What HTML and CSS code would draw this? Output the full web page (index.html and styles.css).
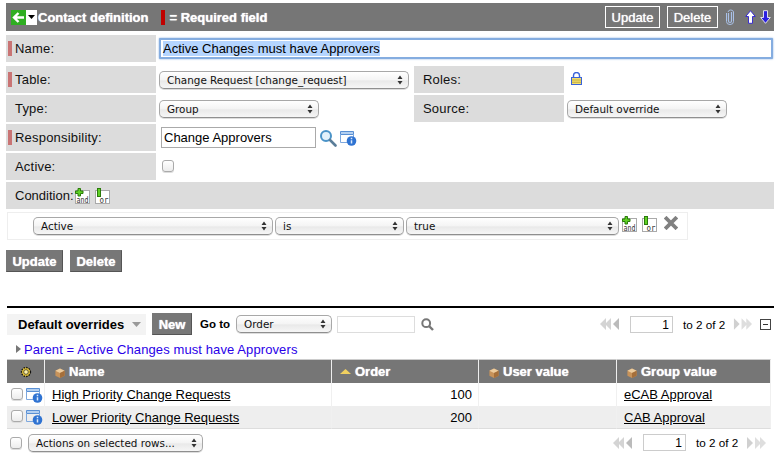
FILE: index.html
```html
<!DOCTYPE html>
<html lang="en">
<head>
<meta charset="utf-8">
<title>Contact definition</title>
<link rel="stylesheet" href="styles.css">
</head>
<body>
<svg class="defs" width="0" height="0" aria-hidden="true">
  <defs>
    <symbol id="info" viewBox="0 0 18 16">
      <path d="M1.500 1.500h13v3h-13z" fill="#b4d0f0" stroke="#5a90d4"/>
      <path d="M1.500 4.500v8h7M14.500 4.500v3" fill="none" stroke="#7ea8de"/>
      <circle cx="12.500" cy="11" r="4.800" fill="#2f73d2"/>
      <path d="M12.500 7.800v1.400M12.500 10.200v3.400" stroke="#dbe9fb" stroke-width="1.500"/>
    </symbol>
    <symbol id="box" viewBox="0 0 12 12">
      <path d="M6 1.500l4.600 2.200v5L6 11 1.400 8.700v-5z" fill="#c8935a"/>
      <path d="M6 1.500l4.600 2.200L6 6 1.400 3.700z" fill="#eccb9c"/>
      <path d="M6 6v5l4.600-2.300v-5z" fill="#a56f3a"/>
    </symbol>
    <symbol id="mag" viewBox="0 0 18 18">
      <circle cx="7" cy="7" r="5" fill="#e2f1fb" stroke="#4a93c8" stroke-width="2"/>
      <path d="M11 11l5.500 5.500" stroke="#5a7d99" stroke-width="2.600" stroke-linecap="round"/>
    </symbol>
    <symbol id="stepper" viewBox="0 0 6 10">
      <path d="M3 .5L5.500 4H.5zM3 9.500L.5 6h5z" fill="#333"/>
    </symbol>
    <symbol id="dbl-left" viewBox="0 0 20 12">
      <path d="M6 0v12L0 6zM11 0v12L5 6z" fill="#d4d4d4"/>
      <path d="M19 0v12l-6-6z" fill="#bbb"/>
    </symbol>
    <symbol id="dbl-right" viewBox="0 0 20 12">
      <path d="M1 0v12l6-6z" fill="#d0d0d0"/>
      <path d="M9 0v12l6-6zM14 0v12l6-6z" fill="#dedede"/>
    </symbol>
    <symbol id="and" viewBox="0 0 16 16">
      <rect x="1.500" y="2.500" width="14" height="13" fill="#fff" stroke="#aaa"/>
      <path d="M4 .5h2.500V3H9v2.500H6.500V8H4V5.500H1.500V3H4z" fill="#5fd024" stroke="#2b7a0b"/>
      <text x="2.500" y="15" class="and-text" textLength="12" lengthAdjust="spacingAndGlyphs">and</text>
    </symbol>
    <symbol id="or" viewBox="0 0 16 16">
      <rect x="1.500" y="2.500" width="14" height="13" fill="#fff" stroke="#aaa"/>
      <rect x="3.500" y=".5" width="3" height="8" fill="#5fd024" stroke="#2b7a0b"/>
      <text x="5.500" y="15" class="and-text" textLength="9" lengthAdjust="spacingAndGlyphs">or</text>
    </symbol>
  </defs>
</svg>

<div class="page">
  <header class="titlebar">
    <span class="back">
      <svg class="back-icon" viewBox="0 0 15 15" width="15" height="15"><rect width="15" height="15" fill="#2fae22"/><path d="M7.500 3L3 7.500 7.500 12M3.500 7.500H13" fill="none" stroke="#fff" stroke-width="2.400"/></svg>
      <svg class="back-caret" viewBox="0 0 7 4" width="7" height="4"><path d="M0 0h7L3.500 4z" fill="#000"/></svg>
    </span>
    <span class="title">Contact definition</span>
    <span class="req-mark"></span>
    <span class="title">= Required field</span>
    <span class="spacer"></span>
    <button class="hbtn hbtn-update">Update</button>
    <button class="hbtn hbtn-delete">Delete</button>
    <svg class="clip" viewBox="0 0 10 16" width="10" height="16"><path d="M3.500 4v8a1.500 1.500 0 0 0 3 0V3" fill="none" stroke="#a9c0e6" stroke-width="1.200"/><path d="M1.500 4v8.500a3.500 3 0 0 0 7 0V3A2.800 2.500 0 0 0 3 3" fill="none" stroke="#a9c0e6"/></svg>
    <svg class="arrow-up" viewBox="0 0 11 14" width="11" height="14"><path d="M5.500 .7L10.300 6.500H7.500V13.300H3.500V6.500H.7z" fill="#fff" stroke="#3b2fd0"/></svg>
    <svg class="arrow-down" viewBox="0 0 11 14" width="11" height="14"><path d="M5.500 13.300L10.300 7.500H7.500V.7h-4v6.800H.7z" fill="#2a1fe0" stroke="#fff" stroke-width=".8"/></svg>
  </header>

  <section class="form">
    <div class="label req name-label">Name:</div>
    <div class="name-value"><div class="name-input"><span class="selected">Active Changes must have Approvers</span></div></div>

    <div class="label req">Table:</div>
    <div class="value"><div class="sel sel-table">Change Request [change_request]<svg class="step"><use href="#stepper"/></svg></div></div>
    <div class="label lab2">Roles:</div>
    <div class="value"><svg class="lock" viewBox="0 0 11 13" width="11" height="13"><path d="M2.500 6V3.500a3 3 0 0 1 6 0V6" fill="none" stroke="#3a63d8" stroke-width="1.400"/><rect x=".5" y="5.500" width="10" height="7" fill="#f1dc6b" stroke="#3a63d8"/><path d="M1 8h9M1 10.300h9" stroke="#b8a63c" stroke-width=".8"/></svg></div>

    <div class="label">Type:</div>
    <div class="value"><div class="sel sel-type">Group<svg class="step"><use href="#stepper"/></svg></div></div>
    <div class="label lab2">Source:</div>
    <div class="value"><div class="sel sel-type">Default override<svg class="step"><use href="#stepper"/></svg></div></div>

    <div class="label req">Responsibility:</div>
    <div class="value resp">
      <div class="text-input">Change Approvers</div>
      <svg class="mag"><use href="#mag"/></svg>
      <svg class="info info-resp"><use href="#info"/></svg>
    </div>
    <div class="wide-blank"></div>

    <div class="label">Active:</div>
    <div class="value active-val"><span class="check"></span></div>
    <div class="wide-blank"></div>

    <div class="label cond-label">Condition:<svg class="aicon cond-and"><use href="#and"/></svg><svg class="aicon cond-or"><use href="#or"/></svg></div>
  </section>

  <div class="cond-box">
    <div class="sel sel-c1">Active<svg class="step"><use href="#stepper"/></svg></div>
    <div class="sel sel-c2">is<svg class="step"><use href="#stepper"/></svg></div>
    <div class="sel sel-c3">true<svg class="step"><use href="#stepper"/></svg></div>
    <svg class="aicon box-and"><use href="#and"/></svg>
    <svg class="aicon box-or"><use href="#or"/></svg>
    <svg class="x" viewBox="0 0 14 14" width="14" height="14"><path d="M2.500 2.500l9 9M11.500 2.500l-9 9" stroke="#808080" stroke-width="3.800" stroke-linecap="square"/></svg>
  </div>

  <div class="actions">
    <button class="gbtn gbtn-update">Update</button>
    <button class="gbtn gbtn-delete">Delete</button>
  </div>

  <hr class="rule">

  <div class="listbar">
    <div class="listname">Default overrides<svg class="listcaret" viewBox="0 0 9 5" width="9" height="5"><path d="M0 0h9L4.500 5z" fill="#999"/></svg></div>
    <button class="gbtn gbtn-new">New</button>
    <span class="goto">Go to</span>
    <div class="sel sel-goto">Order<svg class="step"><use href="#stepper"/></svg></div>
    <div class="search"></div>
    <svg class="search-icon" viewBox="0 0 13 13" width="13" height="13"><circle cx="5.200" cy="5.200" r="3.900" fill="none" stroke="#777" stroke-width="2"/><path d="M8 8l4 4" stroke="#777" stroke-width="2.400"/></svg>
    <span class="spacer"></span>
    <svg class="pg"><use href="#dbl-left"/></svg>
    <div class="page-input">1</div>
    <span class="page-text">to 2 of 2</span>
    <svg class="pg pg-next"><use href="#dbl-right"/></svg>
    <span class="collapse"></span>
  </div>

  <div class="filter"><svg class="filter-arrow" viewBox="0 0 5 8" width="5" height="8"><path d="M0 0l5 4-5 4z" fill="#777"/></svg>Parent = Active Changes must have Approvers</div>

  <table class="list">
    <thead>
      <tr>
        <th class="c-gear"><svg class="gear" viewBox="0 0 12 12" width="12" height="12"><circle cx="6" cy="6" r="4.500" fill="#e8c73a" stroke="#111" stroke-width="1.300" stroke-dasharray="1.600 1"/><circle cx="6" cy="6" r="2.300" fill="#fff3a8" stroke="#222" stroke-width=".7"/></svg></th>
        <th class="c-name"><svg class="cube"><use href="#box"/></svg>Name</th>
        <th class="c-order"><svg class="sort" viewBox="0 0 11 5" width="11" height="5"><path d="M5.500 0L11 5H0z" fill="#f0d060"/></svg>Order</th>
        <th class="c-user"><svg class="cube"><use href="#box"/></svg>User value</th>
        <th class="c-group"><svg class="cube"><use href="#box"/></svg>Group value</th>
      </tr>
    </thead>
    <tbody>
      <tr>
        <td class="row-icons"><span class="check"></span><svg class="info"><use href="#info"/></svg></td>
        <td class="name-cell"><a href="#">High Priority Change Requests</a></td>
        <td class="num">100</td>
        <td></td>
        <td class="group-cell"><a href="#">eCAB Approval</a></td>
      </tr>
      <tr class="alt">
        <td class="row-icons"><span class="check"></span><svg class="info"><use href="#info"/></svg></td>
        <td class="name-cell"><a href="#">Lower Priority Change Requests</a></td>
        <td class="num">200</td>
        <td></td>
        <td class="group-cell"><a href="#">CAB Approval</a></td>
      </tr>
    </tbody>
  </table>

  <div class="footbar">
    <span class="check"></span>
    <div class="sel sel-actions">Actions on selected rows...<svg class="step"><use href="#stepper"/></svg></div>
    <span class="spacer"></span>
    <svg class="pg"><use href="#dbl-left"/></svg>
    <div class="page-input">1</div>
    <span class="page-text">to 2 of 2</span>
    <svg class="pg"><use href="#dbl-right"/></svg>
  </div>
</div>
</body>
</html>
```

FILE: styles.css
```css
* { box-sizing: border-box; }
html, body { margin: 0; padding: 0; background: #fff; }
body { font-family: "Liberation Sans", Arial, sans-serif; font-size: 13px; color: #000; overflow: hidden; }
.defs { position: absolute; }
.and-text { font-family: "DejaVu Sans Mono", monospace; font-size: 8px; fill: #333; }

.page { width: 781px; height: 464px; padding: 3px 7px 0 6px; }
.spacer { flex: 1; }

/* title bar */
.titlebar { display: flex; align-items: center; height: 28px; background: #767676; padding-left: 5px; }
.back { display: flex; align-items: center; height: 15px; background: #fff; width: 26px; }
.back-icon { flex: none; }
.back-caret { flex: none; margin-left: 2px; }
.title { font-weight: bold; font-size: 13px; color: #fff; text-shadow: 0 0 1px #fff; }
.back + .title { margin-left: 1px; }
.req-mark { width: 4px; height: 15px; background: #c00000; margin: 0 5px 0 12px; }
.hbtn { height: 22px; padding: 0; border: 1px solid #fff; background: transparent; color: #fff; font: 13px "Liberation Sans", Arial, sans-serif; text-shadow: 0 0 1px #fff; }
.hbtn-update { width: 55px; }
.hbtn-delete { width: 51px; margin-left: 7px; }
.clip { margin-left: 7px; }
.arrow-up { margin-left: 10px; }
.arrow-down { margin-left: 4px; margin-right: 3px; }

/* form */
.form { display: grid; grid-template-columns: 150px 258px 150px 210px; grid-template-rows: 29px repeat(5, 27px); row-gap: 2px; margin-top: 4px; }
.label { display: flex; align-items: center; background: #dcdcdc; padding-left: 9px; font-size: 13px; letter-spacing: .2px; color: #111; }
.req { position: relative; }
.req::before { content: ""; position: absolute; left: 2px; top: 6px; width: 4px; height: 15px; background: #c97474; }
.name-label { height: 27px; }
.name-value { grid-column: 2 / 5; display: flex; align-items: flex-start; padding: 3px 1px 0 3px; }
.name-input { width: 100%; height: 21px; display: flex; align-items: center; padding-left: 2px; border: 2px solid #85ade0; border-radius: 1px; box-shadow: 0 0 2px #7aa5dc; font-size: 13px; background: #fff; }
.selected { background: #b5d5ff; }
.value { display: flex; align-items: center; padding-left: 3px; }
.lab2 { padding-left: 9px; }
.lock { margin-left: 4px; margin-top: -2px; }
.wide-blank { grid-column: 3 / 5; }
.cond-label { grid-column: 1 / 5; letter-spacing: 0; }

/* fake selects */
.sel { position: relative; display: flex; align-items: center; flex: none; height: 18px; padding-left: 7px; border: 1px solid #a8a8a8; border-bottom-color: #8f8f8f; border-radius: 5px; background: linear-gradient(#fff, #f4f4f4 50%, #e9e9e9 55%, #f6f6f6); font-family: "DejaVu Sans", sans-serif; font-size: 10.400px; color: #111; box-shadow: 0 1px 0 #ddd; }
.step { position: absolute; right: 5px; top: 3px; width: 6px; height: 10px; }
.sel-table { width: 250px; }
.sel-type { width: 160px; }
.sel-c1 { width: 240px; }
.sel-c2 { width: 129px; margin-left: 2px; }
.sel-c3 { width: 213px; margin-left: 2px; }
.sel-goto { width: 96px; margin-left: 6px; }
.sel-actions { width: 175px; margin-left: 6px; }

.text-input { width: 155px; height: 21px; margin-left: 2px; display: flex; align-items: center; padding-left: 2px; border: 1px solid #aaa; font-size: 13px; background: #fff; }
.mag { width: 18px; height: 18px; margin-left: 3px; }
.info { width: 18px; height: 16px; flex: none; }
.info-resp { margin-left: 2px; }

.check { display: block; flex: none; width: 12px; height: 12px; border: 1px solid #aaa; border-radius: 3px; background: linear-gradient(#fff, #ececec); box-shadow: 0 1px 0 #ddd; }
.active-val { padding-left: 6px; }
.active-val .check { margin-top: -2px; }

.aicon { width: 16px; height: 16px; flex: none; }
.cond-and { margin-top: 0; }
.cond-or { margin-left: 4px; }

/* condition box */
.cond-box { display: flex; align-items: center; width: 681px; height: 28px; margin: 3px 0 0 1px; padding: 0 0 0 25px; border: 1px solid #eee; }
.box-and { margin-left: 2px; margin-top: -5px; }
.box-or { margin-left: 4px; margin-top: -5px; }
.x { margin-left: 7px; margin-top: -6px; }

.actions { display: flex; margin-top: 10px; }
.gbtn { height: 22px; padding: 0; border: 1px solid #555; border-top-color: #777; border-left-color: #777; background: #777; color: #fff; font: bold 13px "Liberation Sans", Arial, sans-serif; text-shadow: 0 0 1px #fff; }
.gbtn-update { width: 57px; }
.gbtn-delete { width: 52px; margin-left: 7px; }

.rule { height: 2px; border: 0; margin: 34px 0 0 1px; background: #000; }

/* list bar */
.listbar { display: flex; align-items: center; height: 22px; margin: 5px 3px 0 1px; }
.listname { display: flex; align-items: center; height: 21px; width: 139px; padding-left: 11px; background: #f3f3f3; font-weight: bold; font-size: 13px; }
.listcaret { margin-left: 8px; }
.gbtn-new { width: 40px; margin-left: 6px; height: 22px; }
.goto { margin-left: 8px; font-weight: bold; font-size: 11.500px; }
.search { width: 78px; height: 17px; margin-left: 5px; border: 1px solid #ddd; }
.search-icon { margin-left: 6px; }
.pg { width: 20px; height: 12px; flex: none; }
.pg-next { width: 19px; }
.page-input { width: 43px; height: 17px; margin-left: 10px; padding-right: 3px; border: 1px solid #ccc; text-align: right; font-size: 12px; line-height: 17px; }
.page-text { width: 42px; margin: 0 8px 0 10px; font-size: 11.700px; white-space: nowrap; }
.collapse { position: relative; display: block; width: 11px; height: 11px; margin-left: 8px; border: 1px solid #444; }
.collapse::after { content: ""; position: absolute; left: 2px; top: 4px; width: 5px; height: 1px; background: #333; }

.filter { display: flex; align-items: center; height: 14px; margin: 7px 0 0 10px; color: #2a00e8; font-size: 13px; letter-spacing: .1px; }
.filter-arrow { margin-right: 3px; }

/* table */
.list { border-collapse: separate; border-spacing: 0; table-layout: fixed; width: 764px; margin: 3px 0 0 1px; }
.list th { height: 24px; padding: 0 0 0 9px; background: #767676; border-top: 1px solid #ccc; border-right: 1px solid #eee; color: #fff; font-size: 13px; font-weight: bold; text-align: left; text-shadow: 0 0 1px #fff; }
.list th.c-gear { width: 38px; padding: 0; text-align: center; }
.list th.c-name { width: 287px; }
.list th.c-order { width: 147px; padding-left: 8px; }
.list th.c-user { width: 138px; }
.cube { width: 12px; height: 12px; margin-right: 3px; vertical-align: -3px; }
.sort { margin-right: 4px; vertical-align: 2px; }
.gear { vertical-align: -2px; }
.list td { height: 23px; padding: 0; border-right: 1px solid #f0f0f0; font-size: 13px; }
.list .alt td { background: #eee; border-bottom: 1px solid #ddd; }
.list a { color: #000; }
.list td.row-icons { padding: 0; }
.row-icons .check { display: inline-block; margin-left: 4px; }
.row-icons .info { margin-left: 2px; vertical-align: -3px; }
.list td.name-cell { padding-left: 7px; }
.list td.num { text-align: right; padding-right: 6px; }
.list td.group-cell { padding-left: 7px; }

.footbar { display: flex; align-items: center; height: 21px; margin: 3px 8px 0 4px; }
```
